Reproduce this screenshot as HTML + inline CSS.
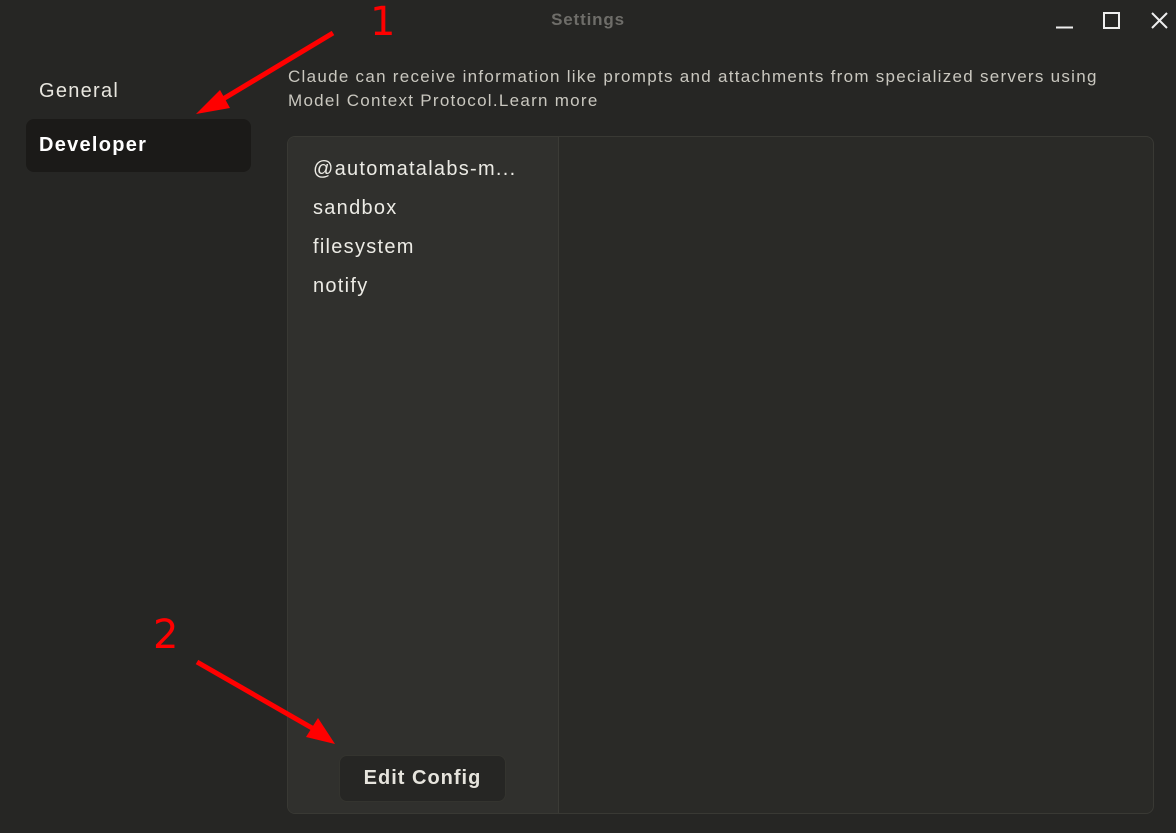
<!DOCTYPE html>
<html><head><meta charset="utf-8"><style>
*{margin:0;padding:0;box-sizing:border-box}
body{width:1176px;height:833px;background:#262624;font-family:"Liberation Sans","DejaVu Sans",sans-serif;color:#e8e6df;position:relative;overflow:hidden;letter-spacing:.08em}
.abs{position:absolute}
.title{left:0;width:1176px;top:10px;text-align:center;font-size:17px;font-weight:bold;color:#6e6d69;letter-spacing:.05em}
.nav{font-size:20px;left:39px}
.dev{left:26px;top:119px;width:225px;height:53px;background:#1b1a18;border-radius:8px}
.desc{left:288px;top:65px;font-size:17px;line-height:24px;color:#c9c7bf;white-space:nowrap}
.panel{left:287px;top:136px;width:867px;height:678px;border:1px solid #393934;border-radius:8px;background:#2a2a27;overflow:hidden}
.side{left:0;top:0;width:271px;height:100%;background:#30302d;border-right:1px solid #3b3b36}
.item{left:25px;font-size:20px;color:#ecebe5;white-space:nowrap}
.btn{left:51px;top:618px;width:167px;height:47px;background:#262624;border:1px solid #34342f;border-radius:8px;text-align:center;line-height:45px;font-size:20px;font-weight:bold;color:#e6e4dd;letter-spacing:.05em}
</style></head><body>
<div class="abs title">Settings</div>
<svg class="abs" style="left:0;top:0" width="1176" height="833">
<line x1="1056" y1="27.5" x2="1073" y2="27.5" stroke="#eee" stroke-width="2"/>
<rect x="1104" y="13" width="15" height="15" fill="none" stroke="#eee" stroke-width="2"/>
<path d="M1152 13L1167 28M1167 13L1152 28" stroke="#eee" stroke-width="2"/>
</svg>
<div class="abs dev"></div>
<div class="abs nav" style="top:80px">General</div>
<div class="abs nav" style="top:134px;font-weight:bold;color:#fff">Developer</div>
<div class="abs desc">Claude can receive information like prompts and attachments from specialized servers using<br>Model Context Protocol.Learn more</div>
<div class="abs panel">
<div class="abs side">
<div class="abs item" style="top:21px">@automatalabs-m...</div>
<div class="abs item" style="top:60px">sandbox</div>
<div class="abs item" style="top:99px">filesystem</div>
<div class="abs item" style="top:138px">notify</div>
<div class="abs btn">Edit Config</div>
</div>
</div>
<svg class="abs" style="left:0;top:0" width="1176" height="833">
<text x="370" y="35" fill="#f00" font-size="40" font-family="DejaVu Sans">1</text>
<line x1="333" y1="33" x2="218" y2="102" stroke="#f00" stroke-width="5"/>
<polygon points="196,114 220,90 230,108" fill="#f00"/>
<text x="153" y="648" fill="#f00" font-size="40" font-family="DejaVu Sans">2</text>
<line x1="197" y1="662" x2="312" y2="728" stroke="#f00" stroke-width="5"/>
<polygon points="335,744 306,737 318,718" fill="#f00"/>
</svg>
</body></html>
